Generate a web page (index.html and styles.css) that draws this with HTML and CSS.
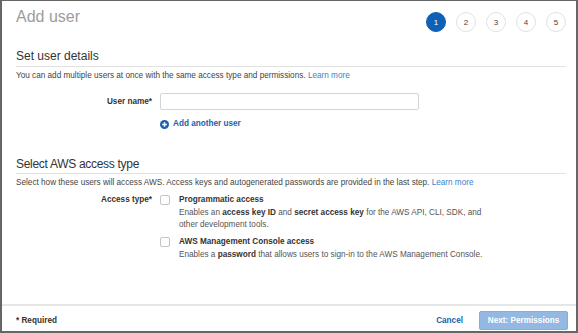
FILE: index.html
```html
<!DOCTYPE html>
<html lang="en">
<head>
<meta charset="utf-8">
<title>Add user</title>
<link rel="stylesheet" href="styles.css">
</head>
<body>
<div class="frame">
  <div class="content">
    <div class="header">
      <h1 class="title">Add user</h1>
      <div class="steps">
        <span class="step active">1</span>
        <span class="step">2</span>
        <span class="step">3</span>
        <span class="step">4</span>
        <span class="step">5</span>
      </div>
    </div>

    <h2 class="section-title first">Set user details</h2>
    <p class="desc">You can add multiple users at once with the same access type and permissions. <a class="link">Learn more</a></p>

    <div class="row name-row">
      <label class="label">User name*</label>
      <div class="field"><span class="input"></span></div>
    </div>
    <div class="row add-row">
      <span class="label"></span>
      <a class="add-user">
        <svg class="plus" viewBox="0 0 10 10" width="9" height="9"><circle cx="5" cy="5" r="5" fill="#1a62b0"/><path d="M5 2.4v5.2M2.4 5h5.2" stroke="#fff" stroke-width="1.7"/></svg>
        Add another user
      </a>
    </div>

    <h2 class="section-title second">Select AWS access type</h2>
    <p class="desc">Select how these users will access AWS. Access keys and autogenerated passwords are provided in the last step. <a class="link">Learn more</a></p>

    <div class="row access-row">
      <span class="label access-label">Access type*</span>
      <div class="options">
        <div class="option">
          <span class="checkbox"></span>
          <div class="option-text">
            <div class="option-title">Programmatic access</div>
            <div class="option-desc">Enables an <b>access key ID</b> and <b>secret access key</b> for the AWS API, CLI, SDK, and other development tools.</div>
          </div>
        </div>
        <div class="option second-option">
          <span class="checkbox"></span>
          <div class="option-text">
            <div class="option-title">AWS Management Console access</div>
            <div class="option-desc">Enables a <b>password</b> that allows users to sign-in to the AWS Management Console.</div>
          </div>
        </div>
      </div>
    </div>
  </div>

  <div class="footer">
    <span class="required">* Required</span>
    <div class="actions">
      <a class="cancel">Cancel</a>
      <span class="next">Next: Permissions</span>
    </div>
  </div>
</div>
</body>
</html>
```

FILE: styles.css
```css
html, body {
  margin: 0;
  padding: 0;
  background: #ffffff;
}

body {
  font-family: "Liberation Sans", Arial, sans-serif;
  color: #444;
}

.frame {
  width: 578px;
  height: 333px;
  box-sizing: border-box;
  border: 2px solid #666;
  border-top-width: 1px;
  display: flex;
  flex-direction: column;
  background: #fff;
}

.content {
  flex: 1;
  padding: 0 10px 0 14px;
}

.header {
  display: flex;
  justify-content: space-between;
  align-items: flex-start;
  padding-top: 6px;
}

.title {
  margin: 0;
  font-size: 16px;
  line-height: 20px;
  font-weight: normal;
  color: #9c9c9c;
}

.steps {
  display: flex;
  gap: 10px;
  margin-top: 5px;
}

.step {
  width: 20px;
  height: 20px;
  box-sizing: border-box;
  border: 1px solid #e1e1e1;
  border-radius: 50%;
  display: flex;
  align-items: center;
  justify-content: center;
  font-size: 8px;
  color: #444;
  background: #fff;
}

.step.active {
  background: #1060b5;
  border-color: #1060b5;
  color: #fff;
}

.section-title {
  margin: 0;
  font-size: 12px;
  line-height: 14px;
  font-weight: normal;
  color: #333;
  padding-bottom: 3px;
  border-bottom: 1px solid #e2e2e2;
}

.section-title.first {
  margin-top: 17px;
}

.section-title.second {
  margin-top: 27px;
  padding-bottom: 2px;
  letter-spacing: -0.3px;
}

.desc {
  margin: 3px 0 0;
  font-size: 8.2px;
  line-height: 12px;
  color: #444;
}

.link {
  color: #3b82c8;
}

.row {
  display: flex;
  align-items: center;
}

.label {
  width: 136px;
  flex: none;
  text-align: right;
  padding-right: 8px;
  font-size: 8.2px;
  font-weight: bold;
  color: #333;
}

.name-row {
  margin-top: 11px;
}

.input {
  display: block;
  width: 259px;
  height: 17px;
  box-sizing: border-box;
  border: 1px solid #d4d4d4;
  border-radius: 2px;
}

.add-row {
  margin-top: 8px;
}

.add-user {
  display: flex;
  align-items: center;
  gap: 4px;
  font-size: 8.2px;
  line-height: 12px;
  font-weight: bold;
  color: #1a5fa8;
}

.plus {
  display: block;
}

.access-row {
  margin-top: 5px;
  align-items: flex-start;
}

.access-label {
  line-height: 12px;
}

.options {
  display: flex;
  flex-direction: column;
}

.option {
  display: flex;
  align-items: flex-start;
  gap: 9px;
}

.second-option {
  margin-top: 5px;
}

.checkbox {
  width: 10px;
  height: 10px;
  box-sizing: border-box;
  border: 1px solid #c4c4c4;
  border-radius: 2px;
  margin-top: 1px;
  flex: none;
}

.option-title {
  font-size: 8.2px;
  line-height: 12px;
  font-weight: bold;
  color: #333;
}

.option-desc {
  margin-top: 1px;
  width: 320px;
  font-size: 8.2px;
  line-height: 12px;
  color: #555;
}

.option-desc b {
  color: #333;
}

.footer {
  border-top: 2px solid #e6e6e6;
  display: flex;
  justify-content: space-between;
  align-items: center;
  padding: 5px 8px 1px 14px;
}

.required {
  font-size: 8.2px;
  font-weight: bold;
  color: #333;
}

.actions {
  display: flex;
  align-items: center;
  gap: 16px;
}

.cancel {
  font-size: 8.2px;
  font-weight: bold;
  color: #1a5fa8;
}

.next {
  display: flex;
  align-items: center;
  justify-content: center;
  width: 89px;
  height: 19px;
  box-sizing: border-box;
  background: #93b8e2;
  border: 1px solid #86acd8;
  border-radius: 2px;
  font-size: 8.2px;
  font-weight: bold;
  color: #fff;
}
```
